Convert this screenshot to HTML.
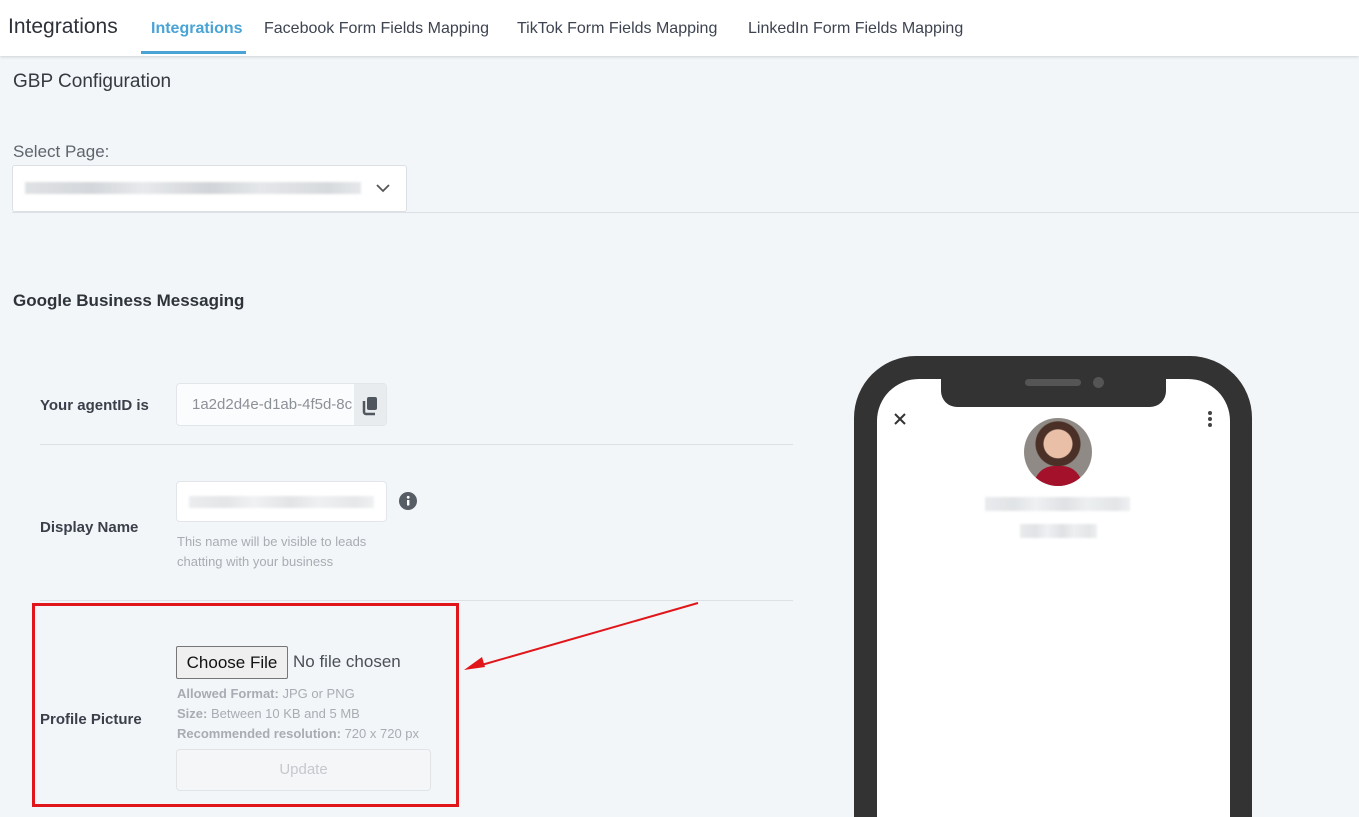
<!DOCTYPE html>
<html style="width:1359px;height:817px;overflow:hidden"><head><meta charset="utf-8"><style>
*{box-sizing:border-box;margin:0;padding:0}
body{width:1359px;height:817px;overflow:hidden;background:#f2f6f9;font-family:"Liberation Sans",Arial,sans-serif;position:relative;color:#333}
.a{position:absolute}
.hdr{left:0;top:0;width:1359px;height:56px;background:#fff;box-shadow:0 1px 3px rgba(0,0,0,.15)}
.tab{top:20px;font-size:16px;color:#3d4450}
.blur{background:linear-gradient(90deg,#d8dbdf,#c9cdd2 20%,#e2e5e8 35%,#c6cacf 55%,#dfe2e5 70%,#cdd1d5 90%,#e0e3e6);height:12px;opacity:.8;filter:blur(1px)}
.lbl{font-size:15px;font-weight:bold;color:#3a3f4a}
.inp{background:#fbfcfd;border:1px solid #e2e6ea;border-radius:4px}
.hint{font-size:13px;color:#a9adb3;line-height:20px}
.hr{height:1px;background:#dde1e5}
</style></head><body>
<div class="a hdr"></div>
<div class="a" style="left:8px;top:15px;font-size:21px;color:#2d3138">Integrations</div>
<div class="a tab" style="left:151px;color:#4aa3d5;font-weight:bold">Integrations</div>
<div class="a" style="left:141px;top:51px;width:105px;height:3px;background:#4aa3d5"></div>
<div class="a tab" style="left:264px">Facebook Form Fields Mapping</div>
<div class="a tab" style="left:517px">TikTok Form Fields Mapping</div>
<div class="a tab" style="left:748px">LinkedIn Form Fields Mapping</div>

<div class="a" style="left:13px;top:71px;font-size:19px;color:#343a40">GBP Configuration</div>
<div class="a" style="left:13px;top:142px;font-size:17px;color:#5f656d">Select Page:</div>
<div class="a" style="left:12px;top:165px;width:395px;height:47px;background:#fff;border:1px solid #dcdfe3;border-radius:3px"></div>
<div class="a blur" style="left:25px;top:182px;width:336px"></div>
<svg class="a" style="left:375px;top:183px" width="16" height="10"><path d="M2 2l6 6 6-6" stroke="#555" stroke-width="1.8" fill="none"/></svg>
<div class="a hr" style="left:12px;top:212px;width:1347px"></div>

<div class="a" style="left:13px;top:291px;font-size:17px;font-weight:bold;color:#2f343b">Google Business Messaging</div>

<div class="a lbl" style="left:40px;top:397px">Your agentID is</div>
<div class="a inp" style="left:176px;top:383px;width:211px;height:43px;overflow:hidden">
<div class="a" style="left:15px;top:12px;font-size:15px;color:#8c9197;white-space:nowrap">1a2d2d4e-d1ab-4f5d-8c</div>
<div class="a" style="left:177px;top:0;width:34px;height:43px;background:#e9ecef"></div>
<svg class="a" style="left:185px;top:12px" width="18" height="20"><rect x="5" y="1" width="10" height="13" rx="2" fill="#4f565d"/><path d="M2 5v11a2 2 0 0 0 2 2h9" stroke="#4f565d" stroke-width="2.5" fill="none"/></svg>
</div>
<div class="a hr" style="left:40px;top:444px;width:753px"></div>

<div class="a lbl" style="left:40px;top:519px">Display Name</div>
<div class="a inp" style="left:176px;top:481px;width:211px;height:41px;background:#fff"></div>
<div class="a blur" style="left:189px;top:496px;width:185px;opacity:.5"></div>
<svg class="a" style="left:399px;top:492px" width="18" height="18"><circle cx="9" cy="9" r="9" fill="#565d65"/><rect x="8" y="8" width="2.4" height="5.5" fill="#fff"/><circle cx="9.2" cy="5.3" r="1.4" fill="#fff"/></svg>
<div class="a hint" style="left:177px;top:532px">This name will be visible to leads<br>chatting with your business</div>
<div class="a hr" style="left:40px;top:600px;width:753px"></div>

<div class="a" style="left:32px;top:603px;width:427px;height:204px;border:3px solid #e0161a"></div>
<div class="a lbl" style="left:40px;top:711px">Profile Picture</div>
<div class="a" style="left:176px;top:646px;width:112px;height:33px;background:#efefef;border:1px solid #767676;border-radius:2px;font-size:17px;color:#111;text-align:center;line-height:31px">Choose File</div>
<div class="a" style="left:293px;top:652px;font-size:17px;color:#4b5058">No file chosen</div>
<div class="a hint" style="left:177px;top:684px"><b>Allowed Format:</b> JPG or PNG<br><b>Size:</b> Between 10 KB and 5 MB<br><b>Recommended resolution:</b> 720 x 720 px</div>
<div class="a" style="left:176px;top:749px;width:255px;height:42px;border:1px solid #e1e4e7;border-radius:4px;background:#f4f6f8;font-size:15px;color:#c5c8cc;text-align:center;line-height:40px">Update</div>

<svg class="a" style="left:460px;top:600px" width="245" height="75"><line x1="238" y1="3" x2="18" y2="66" stroke="#e0161a" stroke-width="2"/><path d="M4 70l18-13 3 10z" fill="#e0161a"/></svg>

<div class="a" style="left:854px;top:356px;width:398px;height:461px;background:#333;border-radius:62px 62px 0 0"></div>
<div class="a" style="left:877px;top:379px;width:353px;height:438px;background:#fff;border-radius:42px 42px 0 0"></div>
<div class="a" style="left:941px;top:370px;width:225px;height:37px;background:#333;border-radius:0 0 16px 16px"></div>
<div class="a" style="left:1025px;top:379px;width:56px;height:7px;background:#555;border-radius:4px"></div>
<div class="a" style="left:1093px;top:377px;width:11px;height:11px;background:#555;border-radius:50%"></div>
<svg class="a" style="left:893px;top:412px" width="14" height="14"><path d="M2 2l10 10M12 2L2 12" stroke="#333" stroke-width="2"/></svg>
<svg class="a" style="left:1206px;top:410px" width="8" height="18"><circle cx="4" cy="3" r="2" fill="#444"/><circle cx="4" cy="9" r="2" fill="#444"/><circle cx="4" cy="15" r="2" fill="#444"/></svg>
<div class="a" style="left:1024px;top:418px;width:68px;height:68px;border-radius:50%;overflow:hidden;background:radial-gradient(circle at 50% 38%,#e9bfa8 0 14px,#4a3026 15px 22px,#8f8a85 23px);">
<div class="a" style="left:10px;top:48px;width:48px;height:24px;background:#a3122a;border-radius:20px 20px 0 0"></div></div>
<div class="a blur" style="left:985px;top:497px;width:145px;height:14px;opacity:.55"></div>
<div class="a blur" style="left:1020px;top:524px;width:77px;height:14px;opacity:.55"></div>
</body></html>
